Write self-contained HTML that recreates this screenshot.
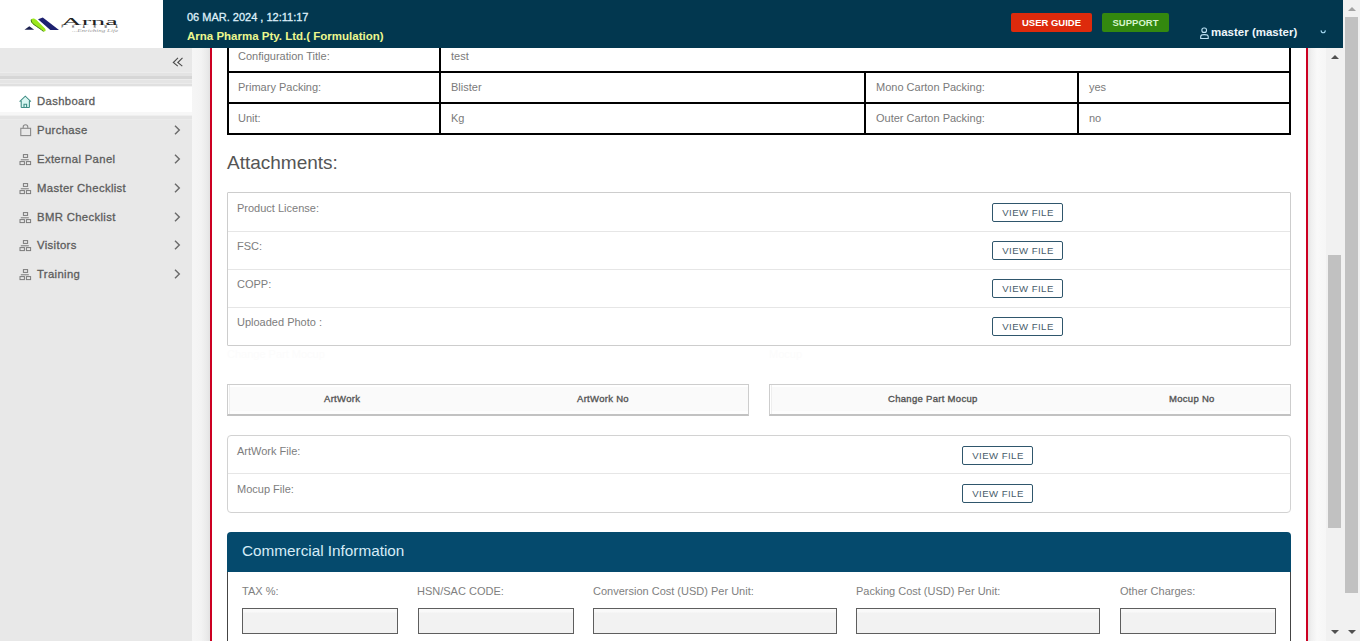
<!DOCTYPE html>
<html><head><meta charset="utf-8">
<style>
*{box-sizing:border-box;margin:0;padding:0}
html,body{width:1360px;height:641px;overflow:hidden;background:#f2f2f2;font-family:"Liberation Sans",sans-serif}
.a{position:absolute}
.t{position:absolute;white-space:nowrap;line-height:1}
#logo{left:0;top:0;width:163px;height:48px;background:#fff}
#hdr{left:163px;top:0;width:1180px;height:48px;background:#02374f}
#side{left:0;top:48px;width:192px;height:593px;background:#e8e8e8}
#card{left:210px;top:0;width:1098px;height:641px;background:#fff;border-left:2px solid #cc0022;border-right:2px solid #cc0022;box-shadow:none}
.bk{position:absolute;background:#000}
.lbl{font-size:11px;color:#7a7a7a}
.val{font-size:11px;color:#7a7a7a}
.box{position:absolute;border:1px solid #cdcdcd;border-radius:1px;background:#fff}
.sep{position:absolute;height:1px;background:#e6e6e6}
.vf{position:absolute;width:71px;height:19px;border:1px solid #2f566c;border-radius:2px;font-size:9.6px;color:#485c6a;text-align:center;line-height:18px;letter-spacing:.45px;padding-left:1px}
.th{position:absolute;border:1px solid #cdcdcd;border-bottom:2px solid #c2c2c2;background:#fafafa;height:32px;border-radius:0;box-shadow:inset 1px 0 0 #fff,inset 2px 0 0 #eee,inset 0 2px 0 #fff,inset 0 -3px 0 #fdfdfd}
.thx{font-size:9.5px;color:#555;font-weight:normal;-webkit-text-stroke:.35px #555;letter-spacing:.3px}
.inp{position:absolute;top:608px;height:26px;border:1px solid #5e5e5e;border-radius:0;background:linear-gradient(#f9f9f9 0,#f9f9f9 3px,#f2f2f2 4px)}
.clbl{font-size:11px;color:#808080}
.mi{position:absolute;left:0;width:192px;height:29px}
.mt{position:absolute;left:37px;font-size:11.3px;font-weight:normal;color:#5c5c5c;-webkit-text-stroke:0.3px #5c5c5c;letter-spacing:.35px}
.chev{position:absolute;left:170px;width:14px;height:14px}
</style></head><body>

<!-- content card -->
<div class="a" style="left:192px;top:48px;width:18px;height:593px;background:linear-gradient(90deg,#f6f6f6 0,#f3f3f3 9px,#eaeaea 15px,#e2e2e2 18px)"></div>
<div class="a" style="left:1308px;top:48px;width:18px;height:593px;background:linear-gradient(90deg,#e2e2e2 0,#efefef 3px,#f9f9f9 9px,#f6f6f6 18px)"></div>
<div id="card" class="a"></div>

<!-- table -->
<div class="a" style="left:227px;top:40px;width:1064px;height:95px;background:#fff"></div>
<div class="bk" style="left:227px;top:40px;width:2px;height:95px"></div>
<div class="bk" style="left:1289px;top:40px;width:2px;height:95px"></div>
<div class="bk" style="left:439px;top:40px;width:2px;height:95px"></div>
<div class="bk" style="left:864px;top:71px;width:2px;height:64px"></div>
<div class="bk" style="left:1077px;top:71px;width:2px;height:64px"></div>
<div class="bk" style="left:227px;top:71px;width:1064px;height:2px"></div>
<div class="bk" style="left:227px;top:102px;width:1064px;height:2px"></div>
<div class="bk" style="left:227px;top:133px;width:1064px;height:2px"></div>
<span class="t lbl" style="left:238px;top:51px">Configuration Title:</span>
<span class="t val" style="left:451px;top:51px">test</span>
<span class="t lbl" style="left:238px;top:82px">Primary Packing:</span>
<span class="t val" style="left:451px;top:82px">Blister</span>
<span class="t lbl" style="left:876px;top:82px">Mono Carton Packing:</span>
<span class="t val" style="left:1089px;top:82px">yes</span>
<span class="t lbl" style="left:238px;top:113px">Unit:</span>
<span class="t val" style="left:451px;top:113px">Kg</span>
<span class="t lbl" style="left:876px;top:113px">Outer Carton Packing:</span>
<span class="t val" style="left:1089px;top:113px">no</span>

<!-- attachments -->
<span class="t" style="left:227px;top:153px;font-size:19px;color:#555">Attachments:</span>
<div class="box" style="left:227px;top:192px;width:1064px;height:154px"></div>
<div class="sep" style="left:228px;top:231px;width:1062px"></div>
<div class="sep" style="left:228px;top:269px;width:1062px"></div>
<div class="sep" style="left:228px;top:307px;width:1062px"></div>
<span class="t lbl" style="left:237px;top:203px;color:#7d7d7d">Product License:</span>
<span class="t lbl" style="left:237px;top:241px;color:#7d7d7d">FSC:</span>
<span class="t lbl" style="left:237px;top:279px;color:#7d7d7d">COPP:</span>
<span class="t lbl" style="left:237px;top:317px;color:#7d7d7d">Uploaded Photo :</span>
<div class="vf" style="left:992px;top:203px">VIEW FILE</div>
<div class="vf" style="left:992px;top:241px">VIEW FILE</div>
<div class="vf" style="left:992px;top:279px">VIEW FILE</div>
<div class="vf" style="left:992px;top:317px">VIEW FILE</div>

<span class="t" style="left:227px;top:349px;font-size:11px;color:#fcfcfc">Change Part Mocup</span>
<span class="t" style="left:769px;top:349px;font-size:11px;color:#fcfcfc">Mocup</span>

<!-- artwork headers -->
<div class="th" style="left:227px;top:384px;width:522px"></div>
<div class="th" style="left:769px;top:384px;width:522px"></div>
<span class="t thx" style="left:324px;top:394px">ArtWork</span>
<span class="t thx" style="left:577px;top:394px">ArtWork No</span>
<span class="t thx" style="left:888px;top:394px">Change Part Mocup</span>
<span class="t thx" style="left:1169px;top:394px">Mocup No</span>

<div class="box" style="left:227px;top:435px;width:1064px;height:78px;border-radius:4px;border-color:#d2d2d2"></div>
<div class="sep" style="left:228px;top:473px;width:1062px"></div>
<span class="t lbl" style="left:237px;top:446px;color:#7d7d7d">ArtWork File:</span>
<span class="t lbl" style="left:237px;top:484px;color:#7d7d7d">Mocup File:</span>
<div class="vf" style="left:962px;top:446px">VIEW FILE</div>
<div class="vf" style="left:962px;top:484px">VIEW FILE</div>

<!-- commercial -->
<div class="a" style="left:227px;top:532px;width:1064px;height:40px;background:#054a6d;border-radius:4px 4px 0 0"></div>
<span class="t" style="left:242px;top:543px;font-size:15.3px;color:#d6ecf7">Commercial Information</span>
<div class="a" style="left:227px;top:572px;width:1064px;height:80px;border-left:1px solid #444;border-right:1px solid #444;background:#fff"></div>
<span class="t clbl" style="left:242px;top:586px">TAX %:</span>
<span class="t clbl" style="left:417px;top:586px">HSN/SAC CODE:</span>
<span class="t clbl" style="left:593px;top:586px">Conversion Cost (USD) Per Unit:</span>
<span class="t clbl" style="left:856px;top:586px">Packing Cost (USD) Per Unit:</span>
<span class="t clbl" style="left:1120px;top:586px">Other Charges:</span>
<div class="inp" style="left:242px;width:156px"></div>
<div class="inp" style="left:418px;width:156px"></div>
<div class="inp" style="left:593px;width:244px"></div>
<div class="inp" style="left:856px;width:244px"></div>
<div class="inp" style="left:1120px;width:156px"></div>

<!-- inner scrollbar -->
<div class="a" style="left:1326px;top:48px;width:17px;height:593px;background:#f1f1f1"></div>
<div class="a" style="left:1328px;top:255px;width:13px;height:273px;background:#c1c1c1"></div>
<div class="a" style="left:1331px;top:55px;width:0;height:0;border-left:4px solid transparent;border-right:4px solid transparent;border-bottom:4px solid #505050"></div>
<div class="a" style="left:1331px;top:630px;width:0;height:0;border-left:4px solid transparent;border-right:4px solid transparent;border-top:4px solid #505050"></div>

<!-- outer scrollbar -->
<div class="a" style="left:1343px;top:0;width:17px;height:641px;background:#f1f1f1"></div>
<div class="a" style="left:1345px;top:17px;width:13px;height:576px;background:#c1c1c1"></div>
<div class="a" style="left:1348px;top:7px;width:0;height:0;border-left:4px solid transparent;border-right:4px solid transparent;border-bottom:4px solid #a3a3a3"></div>
<div class="a" style="left:1348px;top:630px;width:0;height:0;border-left:4px solid transparent;border-right:4px solid transparent;border-top:4px solid #505050"></div>

<!-- sidebar -->
<div id="side" class="a">
  <div class="a" style="left:0;top:24px;width:192px;height:15px;background:linear-gradient(#ececec 0,#ececec 1px,#e3e3e3 1px,#e3e3e3 4px,#d6d6d6 4px,#d6d6d6 7px,#ececec 7px,#ececec 8px,#e5e5e5 8px,#e5e5e5 11px,#ebebeb 11px,#ebebeb 12px,#e0e0e0 12px,#e0e0e0 14px,#f4f4f4 14px)"></div>
</div>
<svg class="a" style="left:170px;top:54px" width="16" height="16" viewBox="0 0 16 16"><path d="M8 3.8L3.3 8.5L7.8 12.2M12.5 3.8L7.8 8.5L12.3 12.2" fill="none" stroke="#4a4a4a" stroke-width="1.1"/></svg>
<div class="mi" style="top:87px;height:34px;background:linear-gradient(#fff 0,#fff 25px,#f7f7f7 25px,#f7f7f7 28px,#efefef 28px,#efefef 29px,#e4e4e4 29px,#e4e4e4 32px,#ebebeb 32px,#ebebeb 33px,#e8e8e8 33px)"></div>
<svg class="a" style="left:17px;top:93px" width="16" height="16" viewBox="0 0 16 16"><path d="M4 8.5L8.3 4.2L12.6 8.5V14.5H4Z" fill="#d8f7f2"/><path d="M2.6 8.6L8.3 3.2L13.9 8.6M4.2 7.8V14.5M12.4 7.8V14.5M4.2 14.5H12.4M7 14.5V11.2H9.6V14.5" fill="none" stroke="#3f8f86" stroke-width="1.1"/></svg>
<svg class="a" style="left:17px;top:121px" width="16" height="16" viewBox="0 0 16 16"><rect x="3.8" y="7.3" width="9.8" height="7.3" fill="none" stroke="#8a8a8a" stroke-width="1.1"/><path d="M6.2 7.3V6A2.3 2.3 0 0 1 10.8 6V7.3" fill="none" stroke="#8a8a8a" stroke-width="1.1"/></svg>
<svg class="a" style="left:17px;top:150px" width="16" height="16" viewBox="0 0 16 16"><rect x="6.4" y="4.6" width="4.2" height="2.8" fill="none" stroke="#7a7a7a" stroke-width="1"/><path d="M3.8 9.8H11.8" stroke="#7a7a7a" stroke-width="1"/><rect x="3" y="11.6" width="4.4" height="3" fill="none" stroke="#7a7a7a" stroke-width="1"/><rect x="9.4" y="11.6" width="4.2" height="3" fill="none" stroke="#7a7a7a" stroke-width="1"/></svg>
<svg class="a" style="left:17px;top:179px" width="16" height="16" viewBox="0 0 16 16"><rect x="6.4" y="4.6" width="4.2" height="2.8" fill="none" stroke="#7a7a7a" stroke-width="1"/><path d="M3.8 9.8H11.8" stroke="#7a7a7a" stroke-width="1"/><rect x="3" y="11.6" width="4.4" height="3" fill="none" stroke="#7a7a7a" stroke-width="1"/><rect x="9.4" y="11.6" width="4.2" height="3" fill="none" stroke="#7a7a7a" stroke-width="1"/></svg>
<svg class="a" style="left:17px;top:208px" width="16" height="16" viewBox="0 0 16 16"><rect x="6.4" y="4.6" width="4.2" height="2.8" fill="none" stroke="#7a7a7a" stroke-width="1"/><path d="M3.8 9.8H11.8" stroke="#7a7a7a" stroke-width="1"/><rect x="3" y="11.6" width="4.4" height="3" fill="none" stroke="#7a7a7a" stroke-width="1"/><rect x="9.4" y="11.6" width="4.2" height="3" fill="none" stroke="#7a7a7a" stroke-width="1"/></svg>
<svg class="a" style="left:17px;top:236px" width="16" height="16" viewBox="0 0 16 16"><rect x="6.4" y="4.6" width="4.2" height="2.8" fill="none" stroke="#7a7a7a" stroke-width="1"/><path d="M3.8 9.8H11.8" stroke="#7a7a7a" stroke-width="1"/><rect x="3" y="11.6" width="4.4" height="3" fill="none" stroke="#7a7a7a" stroke-width="1"/><rect x="9.4" y="11.6" width="4.2" height="3" fill="none" stroke="#7a7a7a" stroke-width="1"/></svg>
<svg class="a" style="left:17px;top:265px" width="16" height="16" viewBox="0 0 16 16"><rect x="6.4" y="4.6" width="4.2" height="2.8" fill="none" stroke="#7a7a7a" stroke-width="1"/><path d="M3.8 9.8H11.8" stroke="#7a7a7a" stroke-width="1"/><rect x="3" y="11.6" width="4.4" height="3" fill="none" stroke="#7a7a7a" stroke-width="1"/><rect x="9.4" y="11.6" width="4.2" height="3" fill="none" stroke="#7a7a7a" stroke-width="1"/></svg>

<span class="t mt" style="top:96px">Dashboard</span>
<span class="t mt" style="top:125px">Purchase</span>
<span class="t mt" style="top:154px">External Panel</span>
<span class="t mt" style="top:183px">Master Checklist</span>
<span class="t mt" style="top:212px">BMR Checklist</span>
<span class="t mt" style="top:240px">Visitors</span>
<span class="t mt" style="top:269px">Training</span>
<svg class="chev" style="top:122px" viewBox="0 0 14 14"><path d="M5 3.7L9.3 8L5 12.3" fill="none" stroke="#6a6a6a" stroke-width="1.4"/></svg>
<svg class="chev" style="top:151px" viewBox="0 0 14 14"><path d="M5 3.7L9.3 8L5 12.3" fill="none" stroke="#6a6a6a" stroke-width="1.4"/></svg>
<svg class="chev" style="top:180px" viewBox="0 0 14 14"><path d="M5 3.7L9.3 8L5 12.3" fill="none" stroke="#6a6a6a" stroke-width="1.4"/></svg>
<svg class="chev" style="top:209px" viewBox="0 0 14 14"><path d="M5 3.7L9.3 8L5 12.3" fill="none" stroke="#6a6a6a" stroke-width="1.4"/></svg>
<svg class="chev" style="top:237px" viewBox="0 0 14 14"><path d="M5 3.7L9.3 8L5 12.3" fill="none" stroke="#6a6a6a" stroke-width="1.4"/></svg>
<svg class="chev" style="top:266px" viewBox="0 0 14 14"><path d="M5 3.7L9.3 8L5 12.3" fill="none" stroke="#6a6a6a" stroke-width="1.4"/></svg>

<!-- header -->
<div id="logo" class="a"><svg class="a" style="left:0;top:0" width="163" height="48" viewBox="0 0 163 48">
<path d="M24.5 29.8L29.3 26.3L34.2 29.8Z" fill="#1c2150"/>
<path d="M38 19.2L42.8 17.4L59 30H50.3Z" fill="#1d2170"/>
<path d="M31.5 19C33 17.8 35 18.5 36.5 20L45 28.5C46 29.8 46 31.5 44 31.5C41 29 37 27 33.5 24.5C31 22.5 30.5 20.5 31.5 19Z" fill="#9be81c"/>
<path d="M31.3 19.5C30.8 21.5 32 23 34 24.6C37.5 27.2 41 29.2 43.5 31.5" fill="none" stroke="#3f7a12" stroke-width="1"/>
<text x="61.3" y="24.7" font-family="Liberation Serif" font-size="10.8" fill="#222" textLength="56.5" lengthAdjust="spacingAndGlyphs">Arna</text>
<text x="61.5" y="28.2" font-family="Liberation Sans" font-size="2.8" font-weight="bold" fill="#444" textLength="56" lengthAdjust="spacing">PHARMA</text>
<text x="72" y="31.8" font-family="Liberation Serif" font-style="italic" font-size="3.6" fill="#999" textLength="46" lengthAdjust="spacingAndGlyphs">...Enriching Life</text>
</svg></div>
<div id="hdr" class="a"></div>
<span class="t" style="left:187px;top:12px;font-size:11px;color:#dff0fa;-webkit-text-stroke:.3px #dff0fa">06 MAR. 2024 , 12:11:17</span>
<span class="t" style="left:187px;top:31px;font-size:11.5px;font-weight:bold;color:#ecf78e">Arna Pharma Pty. Ltd.( Formulation)</span>
<div class="a" style="left:1011px;top:13px;width:81px;height:19px;background:#dd2a0c;border-radius:2px;color:#fff;font-size:9px;font-weight:bold;text-align:center;line-height:20px;font-size:9.5px">USER GUIDE</div>
<div class="a" style="left:1102px;top:13px;width:67px;height:19px;background:#33880f;border-radius:2px;color:#d6f5cc;font-size:9px;font-weight:bold;text-align:center;line-height:20px;font-size:9.5px">SUPPORT</div>
<span class="t" style="left:1211px;top:27px;font-size:11.5px;font-weight:bold;color:#eef6fb">master (master)</span>
<svg class="a" style="left:1196px;top:24px" width="16" height="18" viewBox="0 0 16 18"><rect x="5.9" y="4" width="4.6" height="4.4" rx="2" fill="none" stroke="#bfe3f6" stroke-width="1.1"/><path d="M4.7 14.5V12.5C4.7 11 6 10.6 8.2 10.6C10.4 10.6 12.2 11 12.2 12.5V14.5Z" fill="none" stroke="#bfe3f6" stroke-width="1.1"/></svg>
<svg class="a" style="left:1317px;top:26px" width="12" height="10" viewBox="0 0 12 10"><path d="M4 4.3C4.3 6.3 5 6.8 6.2 6.8C7.4 6.8 8.1 6.3 8.4 4.3" fill="none" stroke="#a6d9f3" stroke-width="1.1"/></svg>

</body></html>
